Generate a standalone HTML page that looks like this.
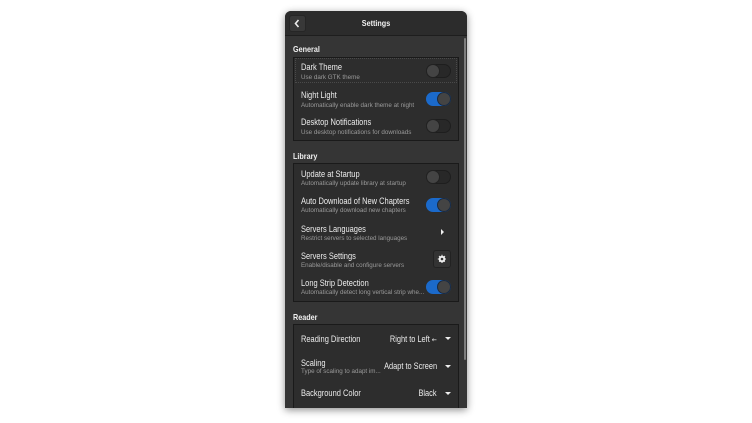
<!DOCTYPE html>
<html><head><meta charset="utf-8"><style>
html,body{margin:0;padding:0;background:#fff;width:752px;height:423px;overflow:hidden}
*{box-sizing:border-box}
body{font-family:"Liberation Sans",sans-serif;position:relative}
.win{position:absolute;left:285px;top:11px;width:182px;height:397px;background:#353535;border-radius:6px 6px 0 0;overflow:hidden;filter:blur(.3px)}
.shadow{position:absolute;left:285px;top:11px;width:182px;height:397px;border-radius:6px 6px 0 0;box-shadow:0 2px 8px rgba(0,0,0,.45)}
.hb{position:absolute;left:0;top:0;width:182px;height:25px;background:#2c2c2c;border-bottom:1px solid #1e1e1e}
.back{position:absolute;left:4px;top:4px;width:17px;height:17px;background:#383838;border:1px solid #262626;border-radius:3px}
.title{position:absolute;left:0;width:182px;top:7px;text-align:center;color:#f2f2f2;font-size:8.4px;font-weight:bold;transform:scaleX(.86)}
.h{position:absolute;left:8px;color:#f0f0f0;font-size:8.4px;font-weight:bold;white-space:nowrap;transform:scaleX(.86);transform-origin:0 50%}
.list{position:absolute;left:8px;width:166px;background:#2d2d2d;border:1px solid #1a1a1a}
.t,.s,.v{position:absolute;white-space:nowrap}
.t{color:#ececec;font-size:8.8px;transform:scaleX(.85);transform-origin:0 50%;margin-top:-.4px}
.s{color:#9a9a9a;font-size:6.6px;transform:scaleX(.95);transform-origin:0 50%;margin-top:.4px}
.v{color:#ececec;font-size:8.8px;text-align:right;transform:scaleX(.84);transform-origin:100% 50%;margin-top:-.4px}
.sw{position:absolute;left:132px;width:25px;height:14px;border-radius:7px;background:#282828;border:1px solid #1e1e1e}
.sw i{position:absolute;left:-1px;top:-1px;width:14px;height:14px;border-radius:50%;background:#444;border:1px solid #222}
.sw.on{background:#1b6acb;border-color:#1b6acb}
.sw.on i{left:10px;border-color:#1a2a40}
.arr{position:absolute;width:0;height:0;border-left:3px solid transparent;border-right:3px solid transparent;border-top:3px solid #eee}
</style></head><body>
<div class="shadow"></div>
<div class="win">
<div class="hb">
<div class="back"><svg width="15" height="15" style="position:absolute;left:0;top:0"><path d="M8.5 4 L5.5 7.5 L8.5 11" fill="none" stroke="#eee" stroke-width="1.6"/></svg></div>
<div class="title">Settings</div>
</div>
<div style="position:absolute;left:179px;top:27px;width:2px;height:322px;background:#7d7d7d;border-radius:1px"></div>

<div class="h" style="top:33px">General</div>
<div class="list" style="top:46px;height:84px">
<div style="position:absolute;left:1px;top:0;width:162px;height:25px;border:1px dotted #4a4a4a"></div>
<div class="t" style="left:7px;top:4px">Dark Theme</div>
<div class="s" style="left:7px;top:16px">Use dark GTK theme</div>
<div class="sw" style="top:6px"><i></i></div>
<div class="t" style="left:7px;top:32px">Night Light</div>
<div class="s" style="left:7px;top:44px">Automatically enable dark theme at night</div>
<div class="sw on" style="top:34px"><i></i></div>
<div class="t" style="left:7px;top:59px">Desktop Notifications</div>
<div class="s" style="left:7px;top:71px">Use desktop notifications for downloads</div>
<div class="sw" style="top:61px"><i></i></div>
</div>

<div class="h" style="top:140px">Library</div>
<div class="list" style="top:152px;height:139px">
<div class="t" style="left:7px;top:5px">Update at Startup</div>
<div class="s" style="left:7px;top:16px">Automatically update library at startup</div>
<div class="sw" style="top:6px"><i></i></div>
<div class="t" style="left:7px;top:32px">Auto Download of New Chapters</div>
<div class="s" style="left:7px;top:43px">Automatically download new chapters</div>
<div class="sw on" style="top:34px"><i></i></div>
<div class="t" style="left:7px;top:60px">Servers Languages</div>
<div class="s" style="left:7px;top:71px">Restrict servers to selected languages</div>
<div style="position:absolute;left:147px;top:65px;width:0;height:0;border-top:3px solid transparent;border-bottom:3px solid transparent;border-left:3px solid #eee"></div>
<div class="t" style="left:7px;top:87px">Servers Settings</div>
<div class="s" style="left:7px;top:98px">Enable/disable and configure servers</div>
<div style="position:absolute;left:139px;top:86px;width:18px;height:18px;background:#333;border:1px solid #222;border-radius:3px"><svg width="16" height="16" style="position:absolute;left:0;top:0"><circle cx="8" cy="8" r="2.3" fill="none" stroke="#eee" stroke-width="2"/><path d="M8 3.8V12.2M3.8 8H12.2M5 5L11 11M11 5L5 11" stroke="#eee" stroke-width="1" stroke-dasharray="1.3 5.6" /></svg></div>
<div class="t" style="left:7px;top:114px">Long Strip Detection</div>
<div class="s" style="left:7px;top:125px">Automatically detect long vertical strip whe...</div>
<div class="sw on" style="top:116px"><i></i></div>
</div>

<div class="h" style="top:301px">Reader</div>
<div class="list" style="top:313px;height:90px">
<div class="t" style="left:7px;top:9px">Reading Direction</div>
<div class="v" style="right:21px;top:9px">Right to Left <span style="font-size:7px;font-family:'DejaVu Sans',sans-serif">←</span></div>
<div class="arr" style="left:151px;top:12px"></div>
<div class="t" style="left:7px;top:33px">Scaling</div>
<div class="s" style="left:7px;top:43px">Type of scaling to adapt im...</div>
<div class="v" style="right:21px;top:36px">Adapt to Screen</div>
<div class="arr" style="left:151px;top:40px"></div>
<div class="t" style="left:7px;top:63px">Background Color</div>
<div class="v" style="right:21px;top:63px">Black</div>
<div class="arr" style="left:151px;top:67px"></div>
</div>
</div>
</body></html>
